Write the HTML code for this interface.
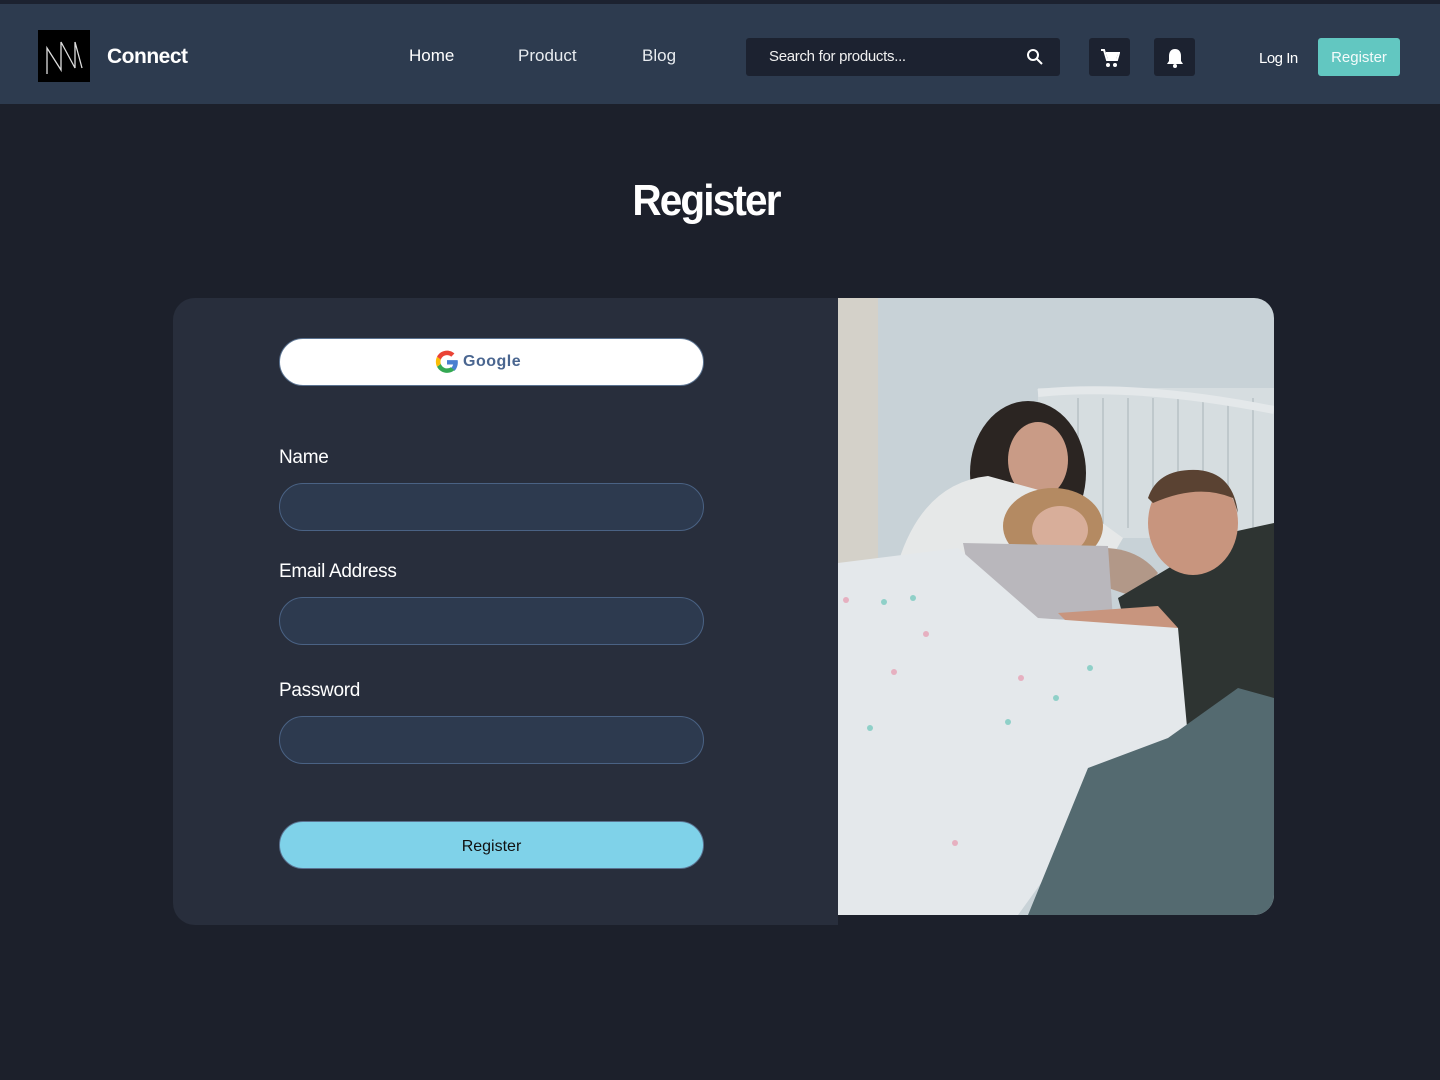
<!DOCTYPE html>
<html><head><meta charset="utf-8"><style>
*{box-sizing:border-box;margin:0;padding:0}
body{width:1440px;height:1080px;background:#1c202b;font-family:"Liberation Sans",sans-serif;position:relative;overflow:hidden;color:#fff}
.top{position:absolute;left:0;top:0;width:1440px;height:4px;background:#1c2230}
.nav{position:absolute;left:0;top:4px;width:1440px;height:100px;background:#2d3b4f}
.abs{position:absolute}
.logo{left:38px;top:30px;width:52px;height:52px;background:#000}
.brand{left:107px;top:45px;font-size:21px;font-weight:bold;letter-spacing:-0.5px}
.nl{top:46px;font-size:17px;color:#e8ecf0}
.search{left:746px;top:38px;width:314px;height:38px;background:#1c2230;border-radius:3px}
.search span{position:absolute;left:23px;top:10px;font-size:15px;color:#f0f0f0;letter-spacing:-0.3px}
.ib{top:38px;width:41px;height:38px;background:#1c2230;border-radius:3px}
.reg{left:1318px;top:38px;width:82px;height:38px;background:#62c7c1;border-radius:3px;font-size:15px;text-align:center;line-height:40px;color:#f4fbfb}
h1{position:absolute;left:0;width:1412px;text-align:center;top:176px;font-size:44px;font-weight:bold;letter-spacing:-2px;transform:scaleX(0.92)}
.card{left:173px;top:298px;width:665px;height:627px;background:#282e3c;border-radius:22px 0 0 22px}
.g{left:279px;top:338px;width:425px;height:48px;background:#fff;border:1px solid #5a7290;border-radius:24px}
.lbl{left:279px;font-size:19px;color:#fff;letter-spacing:-0.3px}
.inp{left:279px;width:425px;height:48px;background:#2d3a4f;border:1px solid #4a6284;border-radius:24px}
.btn{left:279px;top:821px;width:425px;height:48px;background:#7fd2e9;border:1px solid #5a7290;border-radius:24px;color:#111;font-size:16px;text-align:center;line-height:50px}
.photo{left:838px;top:298px;width:436px;height:617px;border-radius:0 20px 20px 0;overflow:hidden}
</style></head><body>
<div class="top"></div><div class="nav"></div>
<div class="abs logo"><svg width="52" height="52"><path d="M9 44V18L23 40V12L37 38V12L44 38" fill="none" stroke="#ddd" stroke-width="1.3"/></svg></div>
<div class="abs brand">Connect</div>
<div class="abs nl" style="left:409px;color:#fff">Home</div>
<div class="abs nl" style="left:518px">Product</div>
<div class="abs nl" style="left:642px">Blog</div>
<div class="abs search"><span>Search for products...</span>
<svg class="abs" style="left:280px;top:10px" width="18" height="18"><circle cx="7" cy="7" r="5" fill="none" stroke="#fff" stroke-width="2"/><path d="M11 11l5 5" stroke="#fff" stroke-width="2"/></svg></div>
<div class="abs ib" style="left:1089px"><svg class="abs" style="left:11px;top:10px" width="20" height="20"><path d="M1 2h3l3 10h10l2-7H6" fill="none" stroke="#fff" stroke-width="2"/><path d="M6 5h12l-2 7H8z" fill="#fff"/><circle cx="8" cy="17" r="2" fill="#fff"/><circle cx="15" cy="17" r="2" fill="#fff"/></svg></div>
<div class="abs ib" style="left:1154px"><svg class="abs" style="left:11px;top:9px" width="20" height="22"><path d="M10 2c-4 0-6 3-6 7v5l-2 3h16l-2-3V9c0-4-2-7-6-7z" fill="#fff"/><circle cx="10" cy="19" r="2" fill="#fff"/></svg></div>
<div class="abs" style="left:1259px;top:50px;font-size:15px;letter-spacing:-0.5px">Log In</div>
<div class="abs reg">Register</div>
<h1>Register</h1>
<div class="abs card"></div>
<div class="abs g"><svg class="abs" style="left:154px;top:10px" width="26" height="26" viewBox="0 0 48 48"><path d="M44 24.5c0-1.5-.1-2.7-.4-4H24v8h11.3c-.5 2.7-2 5-4.4 6.6l6.8 5.3C41.6 36.8 44 31.2 44 24.5z" fill="#4a7fd0"/><path d="M24 44c5.6 0 10.3-1.8 13.7-5l-6.8-5.3c-1.8 1.300-4.200 2.1-6.9 2.1-5.3 0-9.8-3.6-11.4-8.4l-7 5.4C9 39.5 15.9 44 24 44z" fill="#34a853"/><path d="M12.6 27.4c-.4-1.2-.7-2.5-.7-3.9s.3-2.7.7-3.9l-7-5.4C4.2 17 3.4 20.2 3.4 23.5s.8 6.5 2.2 9.3z" fill="#fbbc05"/><path d="M24 11.2c3 0 5.7 1 7.8 3l5.9-5.9C34.3 5.1 29.6 3 24 3 15.9 3 9 7.5 5.6 14.2l7 5.4c1.6-4.8 6.1-8.4 11.4-8.4z" fill="#ea4335"/></svg>
<span class="abs" style="left:183px;top:14px;font-size:16px;font-weight:bold;color:#4a6690;letter-spacing:0.5px">Google</span></div>
<div class="abs lbl" style="top:447px">Name</div>
<div class="abs inp" style="top:483px"></div>
<div class="abs lbl" style="top:561px">Email Address</div>
<div class="abs inp" style="top:597px"></div>
<div class="abs lbl" style="top:680px">Password</div>
<div class="abs inp" style="top:716px"></div>
<div class="abs btn">Register</div>
<div class="abs photo"><svg width="436" height="617">
<rect width="436" height="617" fill="#c8d2d7"/>
<rect x="0" y="0" width="40" height="270" fill="#d4d1c9"/>
<rect x="200" y="90" width="236" height="150" fill="#d6dde0"/>
<g stroke="#bfc8cc" stroke-width="2"><path d="M240 100v130M265 100v130M290 100v130M315 100v130M340 100v130M365 100v130M390 100v130M415 100v130"/></g>
<path d="M200 95 Q300 85 436 112" stroke="#e4e8ea" stroke-width="8" fill="none"/>
<ellipse cx="190" cy="175" rx="58" ry="72" fill="#2b2522"/>
<ellipse cx="200" cy="162" rx="30" ry="38" fill="#c99b86"/>
<path d="M60 265 Q85 185 150 178 L230 200 L285 240 L250 300 L100 320Z" fill="#e6e8e8"/>
<ellipse cx="215" cy="228" rx="50" ry="38" fill="#b48a62"/>
<ellipse cx="222" cy="232" rx="28" ry="24" fill="#d8ae9a"/>
<path d="M265 250 Q300 250 320 275 L300 300 L270 290Z" fill="#b29888"/>
<path d="M280 300 L390 235 L436 225 L436 470 L330 480Z" fill="#2e3432"/>
<ellipse cx="355" cy="225" rx="45" ry="52" fill="#c8957e"/>
<path d="M310 200 Q320 170 360 172 Q395 175 400 215 L395 200 Q360 185 315 205Z" fill="#5a4232"/>
<path d="M125 245 L270 248 L275 322 L140 320Z" fill="#b9b7bc"/>
<path d="M220 315 L320 308 L340 330 L240 335Z" fill="#c8957e"/>
<path d="M0 265 L120 250 L200 320 L340 330 L350 440 L250 520 L180 617 L0 617Z" fill="#e4e8eb"/>
<path d="M190 617 L250 470 L330 440 L400 390 L436 400 L436 617Z" fill="#546a70"/>
<g fill="#8fd0c8"><circle cx="75" cy="300" r="3"/><circle cx="46" cy="304" r="3"/><circle cx="252" cy="370" r="3"/><circle cx="32" cy="430" r="3"/><circle cx="170" cy="424" r="3"/><circle cx="218" cy="400" r="3"/></g>
<g fill="#e6b0c0"><circle cx="8" cy="302" r="3"/><circle cx="88" cy="336" r="3"/><circle cx="183" cy="380" r="3"/><circle cx="56" cy="374" r="3"/><circle cx="117" cy="545" r="3"/></g>
</svg></div>
</body></html>
